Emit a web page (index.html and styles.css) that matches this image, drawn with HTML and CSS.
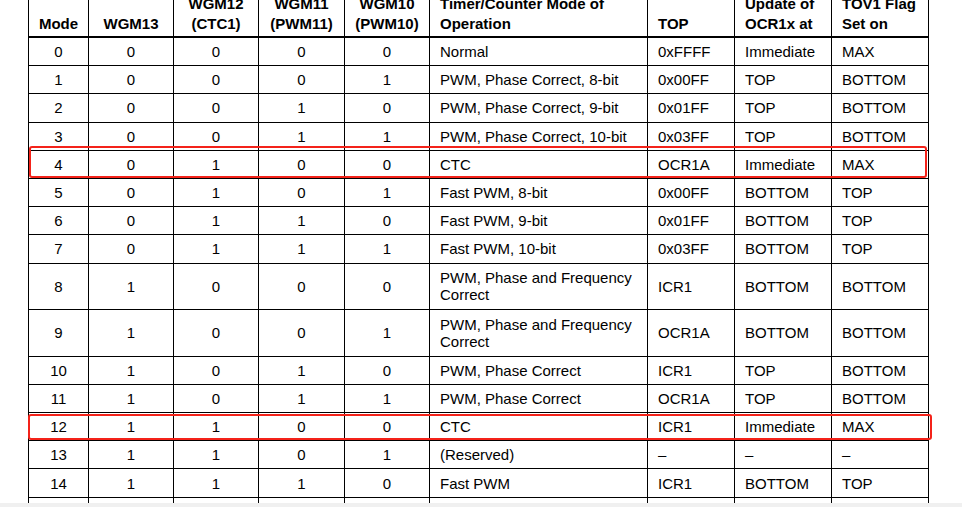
FILE: index.html
```html
<!DOCTYPE html>
<html lang="en">
<head>
<meta charset="utf-8">
<title>Waveform Generation Mode Bit Description</title>
<link rel="stylesheet" href="styles.css">
</head>
<body>
<div class="page">
  <div class="sheet">
    <table class="modes">
      <colgroup>
        <col class="c-mode"><col class="c-bit"><col class="c-bit"><col class="c-bit2"><col class="c-bit">
        <col class="c-op"><col class="c-top"><col class="c-upd"><col class="c-tov">
      </colgroup>
      <thead>
        <tr>
          <th class="ctr">Mode</th>
          <th class="ctr">WGM13</th>
          <th class="ctr">WGM12<br>(CTC1)</th>
          <th class="ctr">WGM11<br>(PWM11)</th>
          <th class="ctr">WGM10<br>(PWM10)</th>
          <th>Timer/Counter Mode of<br>Operation</th>
          <th>TOP</th>
          <th>Update of<br>OCR1x at</th>
          <th>TOV1 Flag<br>Set on</th>
        </tr>
      </thead>
      <tbody>
        <tr><td class="ctr">0</td><td class="ctr">0</td><td class="ctr">0</td><td class="ctr">0</td><td class="ctr">0</td><td>Normal</td><td>0xFFFF</td><td>Immediate</td><td>MAX</td></tr>
        <tr><td class="ctr">1</td><td class="ctr">0</td><td class="ctr">0</td><td class="ctr">0</td><td class="ctr">1</td><td>PWM, Phase Correct, 8-bit</td><td>0x00FF</td><td>TOP</td><td>BOTTOM</td></tr>
        <tr><td class="ctr">2</td><td class="ctr">0</td><td class="ctr">0</td><td class="ctr">1</td><td class="ctr">0</td><td>PWM, Phase Correct, 9-bit</td><td>0x01FF</td><td>TOP</td><td>BOTTOM</td></tr>
        <tr><td class="ctr">3</td><td class="ctr">0</td><td class="ctr">0</td><td class="ctr">1</td><td class="ctr">1</td><td>PWM, Phase Correct, 10-bit</td><td>0x03FF</td><td>TOP</td><td>BOTTOM</td></tr>
        <tr><td class="ctr">4</td><td class="ctr">0</td><td class="ctr">1</td><td class="ctr">0</td><td class="ctr">0</td><td>CTC</td><td>OCR1A</td><td>Immediate</td><td>MAX</td></tr>
        <tr><td class="ctr">5</td><td class="ctr">0</td><td class="ctr">1</td><td class="ctr">0</td><td class="ctr">1</td><td>Fast PWM, 8-bit</td><td>0x00FF</td><td>BOTTOM</td><td>TOP</td></tr>
        <tr><td class="ctr">6</td><td class="ctr">0</td><td class="ctr">1</td><td class="ctr">1</td><td class="ctr">0</td><td>Fast PWM, 9-bit</td><td>0x01FF</td><td>BOTTOM</td><td>TOP</td></tr>
        <tr><td class="ctr">7</td><td class="ctr">0</td><td class="ctr">1</td><td class="ctr">1</td><td class="ctr">1</td><td>Fast PWM, 10-bit</td><td>0x03FF</td><td>BOTTOM</td><td>TOP</td></tr>
        <tr class="tall"><td class="ctr">8</td><td class="ctr">1</td><td class="ctr">0</td><td class="ctr">0</td><td class="ctr">0</td><td>PWM, Phase and Frequency<br>Correct</td><td>ICR1</td><td>BOTTOM</td><td>BOTTOM</td></tr>
        <tr class="tall"><td class="ctr">9</td><td class="ctr">1</td><td class="ctr">0</td><td class="ctr">0</td><td class="ctr">1</td><td>PWM, Phase and Frequency<br>Correct</td><td>OCR1A</td><td>BOTTOM</td><td>BOTTOM</td></tr>
        <tr><td class="ctr">10</td><td class="ctr">1</td><td class="ctr">0</td><td class="ctr">1</td><td class="ctr">0</td><td>PWM, Phase Correct</td><td>ICR1</td><td>TOP</td><td>BOTTOM</td></tr>
        <tr><td class="ctr">11</td><td class="ctr">1</td><td class="ctr">0</td><td class="ctr">1</td><td class="ctr">1</td><td>PWM, Phase Correct</td><td>OCR1A</td><td>TOP</td><td>BOTTOM</td></tr>
        <tr><td class="ctr">12</td><td class="ctr">1</td><td class="ctr">1</td><td class="ctr">0</td><td class="ctr">0</td><td>CTC</td><td>ICR1</td><td>Immediate</td><td>MAX</td></tr>
        <tr><td class="ctr">13</td><td class="ctr">1</td><td class="ctr">1</td><td class="ctr">0</td><td class="ctr">1</td><td>(Reserved)</td><td>–</td><td>–</td><td>–</td></tr>
        <tr><td class="ctr">14</td><td class="ctr">1</td><td class="ctr">1</td><td class="ctr">1</td><td class="ctr">0</td><td>Fast PWM</td><td>ICR1</td><td>BOTTOM</td><td>TOP</td></tr>
        <tr><td class="ctr">15</td><td class="ctr">1</td><td class="ctr">1</td><td class="ctr">1</td><td class="ctr">1</td><td>Fast PWM</td><td>OCR1A</td><td>BOTTOM</td><td>TOP</td></tr>
      </tbody>
    </table>
    <div class="mark mark-a"></div>
    <div class="mark mark-b"></div>
  </div>
  <div class="viewer-edge"></div>
</div>
</body>
</html>
```
FILE: styles.css
```css
html, body {
  margin: 0;
  padding: 0;
  height: 507px;
  overflow: hidden;
  background: #ffffff;
}

.page {
  position: relative;
  width: 962px;
  height: 507px;
  overflow: hidden;
  font-family: "Liberation Sans", Arial, sans-serif;
  color: #000;
}

.sheet {
  position: relative;
  padding-left: 28px;
  margin-top: -11px;
}

.modes {
  table-layout: fixed;
  border-collapse: collapse;
  width: 901px;
  font-size: 15px;
}

.c-mode { width: 60px; }
.c-bit { width: 85px; }
.c-bit2 { width: 86px; }
.c-op { width: 218px; }
.c-top { width: 87px; }
.c-upd { width: 97px; }
.c-tov { width: 97px; }

.modes th,
.modes td {
  border: 1px solid #000;
  padding: 0 4px 0 10px;
  text-align: left;
  white-space: nowrap;
}

.modes th {
  font-size: 15px;
  font-weight: bold;
  line-height: 20px;
  vertical-align: bottom;
  padding-top: 4px;
  padding-bottom: 2px;
  border-bottom: 2px solid #000;
}

.modes td {
  height: 27.2px;
  line-height: 17px;
  vertical-align: middle;
}

.modes tr.tall td {
  height: 45.6px;
  line-height: 17px;
}

.modes .ctr {
  text-align: center;
  padding-left: 0;
  padding-right: 0;
}

.mark {
  position: absolute;
  border: 2px solid #f4231a;
  border-radius: 3px;
  box-sizing: border-box;
}

.mark-a {
  left: 29px;
  top: 157px;
  width: 898px;
  height: 32px;
}

.mark-b {
  left: 28px;
  top: 425px;
  width: 904px;
  height: 26px;
}

.viewer-edge {
  position: absolute;
  left: 0;
  right: 0;
  bottom: 0;
  height: 4px;
  background: #f0f0f0;
}
```
